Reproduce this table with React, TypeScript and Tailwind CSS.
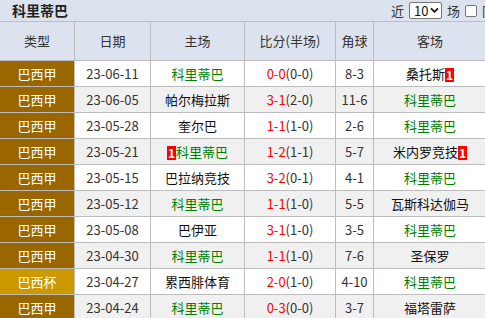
import React from "react";

type Row = {
  league: string;
  cup?: boolean;
  date: string;
  home: string;
  homeUs?: boolean;
  homeCard?: boolean;
  score: string;
  half: string;
  corner: string;
  away: string;
  awayUs?: boolean;
  awayCard?: boolean;
};

const rows: Row[] = [
  { league: "巴西甲", date: "23-06-11", home: "科里蒂巴", homeUs: true, score: "0-0", half: "(0-0)", corner: "8-3", away: "桑托斯", awayCard: true },
  { league: "巴西甲", date: "23-06-05", home: "帕尔梅拉斯", score: "3-1", half: "(2-0)", corner: "11-6", away: "科里蒂巴", awayUs: true },
  { league: "巴西甲", date: "23-05-28", home: "奎尔巴", score: "1-1", half: "(1-0)", corner: "2-6", away: "科里蒂巴", awayUs: true },
  { league: "巴西甲", date: "23-05-21", home: "科里蒂巴", homeUs: true, homeCard: true, score: "1-2", half: "(1-1)", corner: "5-7", away: "米内罗竞技", awayCard: true },
  { league: "巴西甲", date: "23-05-15", home: "巴拉纳竞技", score: "3-2", half: "(0-1)", corner: "4-1", away: "科里蒂巴", awayUs: true },
  { league: "巴西甲", date: "23-05-12", home: "科里蒂巴", homeUs: true, score: "1-1", half: "(1-0)", corner: "5-5", away: "瓦斯科达伽马" },
  { league: "巴西甲", date: "23-05-08", home: "巴伊亚", score: "3-1", half: "(1-0)", corner: "3-5", away: "科里蒂巴", awayUs: true },
  { league: "巴西甲", date: "23-04-30", home: "科里蒂巴", homeUs: true, score: "1-1", half: "(1-0)", corner: "7-6", away: "圣保罗" },
  { league: "巴西杯", cup: true, date: "23-04-27", home: "累西腓体育", score: "2-0", half: "(1-0)", corner: "4-10", away: "科里蒂巴", awayUs: true },
  { league: "巴西甲", date: "23-04-24", home: "科里蒂巴", homeUs: true, score: "0-3", half: "(0-0)", corner: "3-7", away: "福塔雷萨" },
];

function Card() {
  return (
    <span className="inline-block bg-[#ff0000] text-white font-bold text-[12px] leading-[14px] px-[1px] align-[-1px]">1</span>
  );
}

function Team({ name, us, card, cardLeft }: { name: string; us?: boolean; card?: boolean; cardLeft?: boolean }) {
  return (
    <span className={us ? "text-[#008000]" : "text-[#111]"}>
      {card && cardLeft && <Card />}
      {name}
      {card && !cardLeft && <Card />}
    </span>
  );
}

export default function App() {
  const cell = "border border-[#bdbdbd] text-center p-0";
  return (
    <div
      className="w-[485px] h-[318px] overflow-hidden bg-[#dce3ee] text-[13px] text-[#222]"
      style={{ fontFamily: '"Noto Sans CJK SC", "Noto Sans", sans-serif' }}
    >
      {/* title bar */}
      <div className="h-[21px] flex items-center justify-between pl-[12px] whitespace-nowrap">
        <span className="font-bold text-[14px] text-[#222]">科里蒂巴</span>
        <div className="flex items-center gap-[5px] text-[13px] text-[#333] mr-[-36px]">
          <span>近</span>
          <span className="flex items-center h-[17px] w-[33px] bg-white border border-[#767676] rounded-[2px] pl-[4px] text-[13px] text-[#111]">
            10
            <svg viewBox="0 0 10 8" className="w-[9px] h-[7px] ml-[2px]">
              <path d="M1 1.5 L5 5.5 L9 1.5" fill="none" stroke="#111" strokeWidth="2" />
            </svg>
          </span>
          <span>场</span>
          <span className="w-[12px] h-[12px] bg-white border border-[#767676] rounded-[2px]" />
          <span>同主客</span>
        </div>
      </div>

      <table className="table-fixed border-collapse w-[487px] ml-[-1px]">
        <colgroup>
          <col className="w-[75px]" />
          <col className="w-[76px]" />
          <col className="w-[94px]" />
          <col className="w-[91px]" />
          <col className="w-[38px]" />
          <col className="w-[113px]" />
        </colgroup>
        <thead>
          <tr className="h-[39px] bg-[#dce3ee] text-[#333]">
            <th className={cell + " font-normal"}>类型</th>
            <th className={cell + " font-normal"}>日期</th>
            <th className={cell + " font-normal"}>主场</th>
            <th className={cell + " font-normal"}>比分(半场)</th>
            <th className={cell + " font-normal"}>角球</th>
            <th className={cell + " font-normal"}>客场</th>
          </tr>
        </thead>
        <tbody>
          {rows.map((r, i) => (
            <tr key={i} className={"h-[26px] " + (i % 2 === 0 ? "bg-white" : "bg-[#f0f0f0]")}>
              <td className={cell + " text-white " + (r.cup ? "bg-[#cc9900]" : "bg-[#996600]")}>{r.league}</td>
              <td className={cell + " text-[#333]"}>{r.date}</td>
              <td className={cell}>
                <Team name={r.home} us={r.homeUs} card={r.homeCard} cardLeft />
              </td>
              <td className={cell + " text-[#333]"}>
                <span className="text-[#ff0000]">{r.score}</span>
                {r.half}
              </td>
              <td className={cell + " text-[#333]"}>{r.corner}</td>
              <td className={cell}>
                <Team name={r.away} us={r.awayUs} card={r.awayCard} />
              </td>
            </tr>
          ))}
        </tbody>
      </table>
    </div>
  );
}
